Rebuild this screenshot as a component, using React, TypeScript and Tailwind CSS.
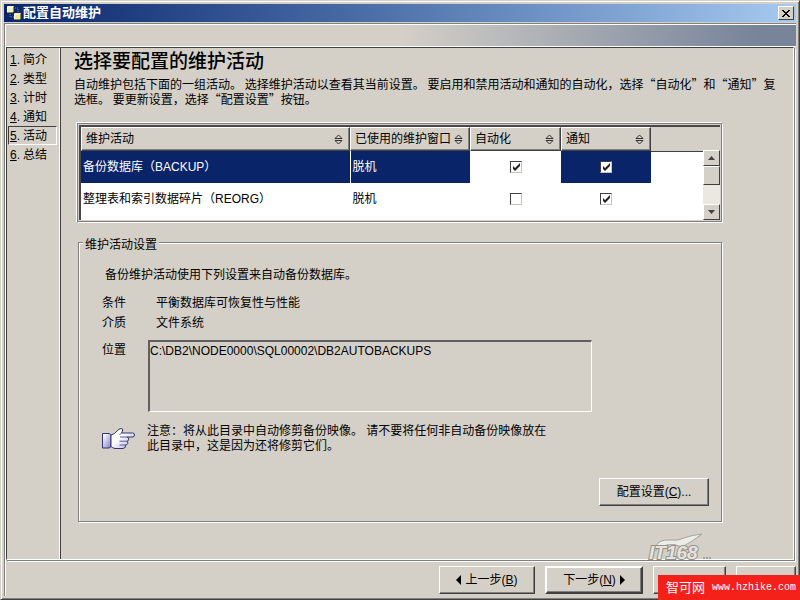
import React from 'react'
import clsx from 'clsx'

const steps = ['简介', '类型', '计时', '通知', '活动', '总结']

const rows = [
    { name: '备份数据库（BACKUP）', window: '脱机', auto: true, notify: true, selected: true },
    { name: '整理表和索引数据碎片（REORG）', window: '脱机', auto: false, notify: true, selected: false },
]

const columns = ['维护活动', '已使用的维护窗口', '自动化', '通知']

const buttonStyle = 'h-7 bg-[#d4d0c8] border border-t-white border-l-white border-b-[#404040] border-r-[#404040] shadow-[inset_-1px_-1px_0_#808080] flex items-center justify-center whitespace-nowrap'

const TitleBar = () => (
    <header className="h-[18px] flex items-center justify-between pl-[2px] pr-[2px] bg-linear-to-r from-[#0a246a] to-[#a6caf0]">
        <div className="flex items-center gap-px">
            <svg width="16" height="16" viewBox="0 0 16 16" aria-hidden="true">
                <path d="M4 9v3h4M9 3h3v4" fill="none" stroke="#7480a0" strokeWidth="1" strokeDasharray="1 1" />
                <path d="M1 2l1-1h6v5l-1 1H1z" fill="#f4efb8" />
                <path d="M1 2h6M1.500 2v5" fill="none" stroke="#fffde8" />
                <path d="M7.500 1.500v4.500M1 7.500h6" fill="none" stroke="#8c8747" />
                <path d="M8 9l1-1h6v5l-1 1H8z" fill="#efe79a" />
                <path d="M8 9h6M8.500 9v5" fill="none" stroke="#fffde8" />
                <path d="M14.500 8.500v4.500M8 14.500h6" fill="none" stroke="#8c8747" />
            </svg>
            <h1 className="text-[13px] leading-[18px] font-bold text-white">配置自动维护</h1>
        </div>
        <button aria-label="关闭" className="w-4 h-[14px] bg-[#d4d0c8] border border-t-white border-l-white border-b-[#404040] border-r-[#404040] flex items-center justify-center">
            <svg width="8" height="7" viewBox="0 0 8 7" shapeRendering="crispEdges">
                <path d="M0 0h2v1H0zM6 0h2v1H6zM1 1h2v1H1zM5 1h2v1H5zM2 2h4v1H2zM3 3h2v1H3zM2 4h4v1H2zM1 5h2v1H1zM5 5h2v1H5zM0 6h2v1H0zM6 6h2v1H6z" fill="#000" />
            </svg>
        </button>
    </header>
)

const Steps = () => (
    <nav className="w-[53px] shrink-0 pt-[2px] pl-px pr-[2px] border-r border-white">
        <ol>
            {steps.map((step, i) => (
                <li key={step}>
                    <a
                        href="#"
                        className={clsx(
                            'flex h-[19px] items-center border pl-px',
                            step === '活动' ? 'border-t-[#404040] border-l-[#404040] border-b-white border-r-white' : 'border-transparent'
                        )}
                    >
                        <span className="w-[13px]"><u>{i + 1}</u>.</span>
                        <span>{step}</span>
                    </a>
                </li>
            ))}
        </ol>
    </nav>
)

const SortIcon = () => (
    <svg width="9" height="11" viewBox="0 0 9 11" className="shrink-0" aria-hidden="true">
        <path d="M1 4.500L4.500 1L8 4.500zM1 6.500L4.500 10L8 6.500z" fill="#d4d0c8" stroke="#303030" strokeWidth="1" />
    </svg>
)

const Check = ({ label, checked }: { label: string; checked: boolean }) => (
    <span className="relative block w-3 h-3 mx-auto">
        <input
            type="checkbox"
            aria-label={label}
            defaultChecked={checked}
            className="peer appearance-none block w-3 h-3 bg-white border border-t-[#404040] border-l-[#404040] border-b-[#c8c4bc] border-r-[#c8c4bc]"
        />
        <svg width="12" height="12" viewBox="0 0 12 12" className="absolute inset-0 hidden peer-checked:block pointer-events-none">
            <path d="M3 5v3l2 2l5-5V2L5 7z" fill="#222" />
        </svg>
    </span>
)

const ActivityTable = () => (
    <div className="border border-[#808080] border-b-white border-r-white shadow-[-1px_-1px_0_#fff,inset_-1px_-1px_0_#808080] p-px pb-[2px] pr-[2px]">
        <div className="flex border-t-2 border-l-2 border-[#484848]">
            <div className="flex-1 min-w-0 bg-white pb-[5px]">
                <table className="table-fixed border-collapse w-full">
                    <colgroup>
                        <col className="w-[269px]" />
                        <col className="w-[120px]" />
                        <col className="w-[91px]" />
                        <col className="w-[90px]" />
                        <col />
                    </colgroup>
                    <thead>
                        <tr className="h-6 bg-[#d4d0c8]">
                            {columns.map(column => (
                                <th key={column} className="p-0 font-normal text-left">
                                    <div className="flex h-6 items-center justify-between pl-1 pr-[6px] border border-t-white border-l-white border-r-[#404040] border-b-[#404040] shadow-[inset_-1px_-1px_0_#808080] whitespace-nowrap">
                                        {column}
                                        <SortIcon />
                                    </div>
                                </th>
                            ))}
                            <td className="p-0 border-b border-[#404040]"></td>
                        </tr>
                    </thead>
                    <tbody>
                        {rows.map(row => (
                            <tr key={row.name} className="h-8">
                                <td className={clsx('p-0 pl-[2px]', row.selected && 'bg-[#0a246a] text-white')}>{row.name}</td>
                                <td className={clsx('p-0 pl-[2px] border-l border-white', row.selected && 'bg-[#0a246a] text-white')}>{row.window}</td>
                                <td className="p-0"><Check label="自动化" checked={row.auto} /></td>
                                <td className={clsx('p-0', row.selected && 'bg-[#0a246a]')}><Check label="通知" checked={row.notify} /></td>
                                <td className="p-0"></td>
                            </tr>
                        ))}
                    </tbody>
                </table>
            </div>
            <div className="w-[17px] shrink-0 flex flex-col">
                <div className="h-[23px]"></div>
                <button aria-label="向上" className="h-4 bg-[#d4d0c8] border border-t-white border-l-white border-b-[#404040] border-r-[#404040] flex items-center justify-center">
                    <svg width="7" height="4" viewBox="0 0 7 4"><path d="M0 4L3.500 0L7 4z" fill="#404040" /></svg>
                </button>
                <div className="flex-1 bg-[#ebe8e2]">
                    <div className="h-[19px] bg-[#d4d0c8] border border-t-white border-l-white border-b-[#404040] border-r-[#404040]"></div>
                </div>
                <button aria-label="向下" className="h-4 bg-[#d4d0c8] border border-t-white border-l-white border-b-[#404040] border-r-[#404040] flex items-center justify-center">
                    <svg width="7" height="4" viewBox="0 0 7 4"><path d="M0 0L3.500 4L7 0z" fill="#404040" /></svg>
                </button>
            </div>
        </div>
    </div>
)

const HandIcon = () => (
    <svg width="34" height="24" viewBox="0 0 34 24" className="shrink-0" aria-hidden="true">
        <defs>
            <linearGradient id="cuff" x1="0" y1="0" x2="1" y2="1">
                <stop offset="0.100" stopColor="#fff" />
                <stop offset="1" stopColor="#7c7cc8" />
            </linearGradient>
            <linearGradient id="palm" x1="0" y1="0" x2="1" y2="1">
                <stop offset="0.400" stopColor="#fff" />
                <stop offset="1" stopColor="#a8a8e2" />
            </linearGradient>
        </defs>
        <path d="M.5 6.500h6.500q2 .5 2 2.500v9.500q0 2-2 2.500H.5z" fill="url(#cuff)" stroke="#34346c" />
        <path d="M9 8q4-1 6-4q2-2.500 4-2.500q2.500 0 1.500 2.500l-1 2H30.500q2 0 2 2t-2 2H25q1.800.5 1.700 2.200q0 1.800-1.700 2q1 .8.700 2.200q-.5 1.600-2.200 1.600q.7 3-2.500 3.500h-8Q10.500 21 9 19.500z" fill="url(#palm)" stroke="#34346c" />
        <path d="M19.500 6l-2 2M18 10h7M17.500 14.200h7.500M17.500 18h6" stroke="#5a5a98" fill="none" />
    </svg>
)

const ActivitySettings = () => (
    <fieldset className="min-w-0 border border-[#808080] shadow-[1px_1px_0_#fff,inset_1px_1px_0_#fff] mx-px px-3 pb-[15px]">
        <legend className="-ml-2 px-[2px] pt-[6px] bg-[#d4d0c8] leading-4">维护活动设置</legend>
        <div className="pl-[11px]">
            <p className="pl-[3px] pt-3 leading-5">备份维护活动使用下列设置来自动备份数据库。</p>
            <dl className="mt-2 grid grid-cols-[54px_1fr] leading-5">
                <dt>条件</dt>
                <dd>平衡数据库可恢复性与性能</dd>
                <dt>介质</dt>
                <dd>文件系统</dd>
            </dl>
            <div className="mt-[7px] flex">
                <label htmlFor="location" className="w-[46px] leading-5">位置</label>
                <textarea
                    id="location"
                    readOnly
                    defaultValue="C:\DB2\NODE0000\SQL00002\DB2AUTOBACKUPS"
                    className="w-[444px] h-[72px] resize-none bg-transparent leading-4 pt-px border-t-2 border-l-2 border-t-[#606060] border-l-[#606060] border-b border-b-white border-r border-r-white outline-none"
                />
            </div>
            <div className="mt-3 flex items-center">
                <HandIcon />
                <p className="ml-[11px] w-[408px] leading-[15px]">注意：将从此目录中自动修剪备份映像。 请不要将任何非自动备份映像放在此目录中，这是因为还将修剪它们。</p>
            </div>
        </div>
        <div className="mt-6 flex justify-end">
            <button className={clsx(buttonStyle, 'w-[110px]')}>配置设置(<u>C</u>)...</button>
        </div>
    </fieldset>
)

const Logo = () => (
    <svg width="68" height="32" viewBox="0 0 68 32" aria-hidden="true">
        <path d="M8 15Q11 6 23 7Q32 8 37 5Q45 2 55 1Q46 8 35 14Q27 10 20 12Q13 13 7 18z" fill="#eeece8" stroke="#a5a39f" />
        <text x="2" y="26" fontFamily="'Liberation Sans', sans-serif" fontSize="19" fontWeight="bold" fontStyle="italic" fill="#e6e4df" stroke="#93918c" strokeWidth="2" paintOrder="stroke">IT168</text>
        <path d="M56 24h2v2h-2zM59 24h2v2h-2zM62 24h2v2h-2z" fill="#a5a39e" />
    </svg>
)

const App = () => {
    return (
        <div className="relative h-screen min-h-[600px] flex flex-col bg-[#d4d0c8] text-black text-[12px] font-['Liberation_Sans','Noto_Sans_CJK_SC',sans-serif] border border-t-[#d4d0c8] border-l-[#d4d0c8] border-r-[#404040] border-b-[#404040] shadow-[inset_1px_1px_0_#fff,inset_-1px_-1px_0_#808080] p-[3px]" lang="zh-CN">
            <TitleBar />
            <div className="mt-px flex-1 flex flex-col border-t border-l border-[#808080]">
                <div className="flex-1 flex flex-col border-t border-l border-white">
                    <div className="h-[21px] bg-linear-to-r from-[#d4d0c8] from-50% to-[#77849a] to-95%"></div>
                    <div className="h-px bg-white"></div>
                    <main className="flex-1 flex mr-[2px] border-t border-l border-[#404040] border-r border-r-white border-b border-b-white shadow-[1px_1px_0_#808080,2px_2px_0_#fff]">
                        <Steps />
                        <div className="flex-1 min-w-0 border-l border-[#404040] pl-[13px] pr-3 pt-[2px]">
                            <h2 className="text-[19px] leading-6 font-medium">选择要配置的维护活动</h2>
                            <p className="mt-[2px] leading-[15px] font-['Noto_Sans_CJK_SC',sans-serif]">自动维护包括下面的一组活动。 选择维护活动以查看其当前设置。 要启用和禁用活动和通知的自动化，选择“自动化”和“通知”复选框。 要更新设置，选择“配置设置”按钮。</p>
                            <div className="mt-[17px] ml-[3px] mr-[58px] flex flex-col gap-2">
                                <ActivityTable />
                                <ActivitySettings />
                            </div>
                        </div>
                    </main>
                    <footer className="mt-[2px] h-[34px] flex items-start justify-end gap-[10px] pt-1">
                        <button className={clsx(buttonStyle, 'w-24 gap-1')}>
                            <svg width="5" height="10" viewBox="0 0 5 10"><path d="M5 0v10L0 5z" /></svg>
                            <span>上一步(<u>B</u>)</span>
                        </button>
                        <button className={clsx(buttonStyle, 'w-[98px] gap-1 border-2 border-t-[#404040] border-l-[#404040]')}>
                            <span>下一步(<u>N</u>)</span>
                            <svg width="5" height="10" viewBox="0 0 5 10"><path d="M0 0v10L5 5z" /></svg>
                        </button>
                        <button aria-label="完成" className={clsx(buttonStyle, 'w-[73px]')}></button>
                        <button aria-label="取消" className={clsx(buttonStyle, 'w-[60px]')}></button>
                    </footer>
                </div>
            </div>
            <div className="absolute right-[84px] bottom-[34px]"><Logo /></div>
            <div className="absolute -right-px -bottom-px w-[142px] h-[25px] bg-[#f4201a] text-white flex items-center justify-between pl-2 pr-1">
                <span className="text-[13px]">智可网</span>
                <span className="font-['Liberation_Mono',monospace] text-[10px]">www.hzhike.com</span>
            </div>
        </div>
    )
}

export default App
